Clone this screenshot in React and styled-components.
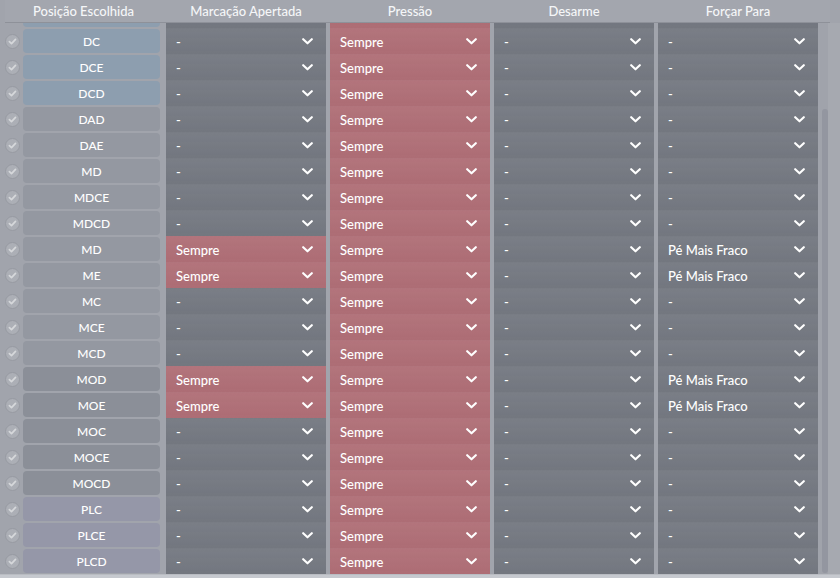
import React, { useLayoutEffect, useRef } from 'react';
import styled, { createGlobalStyle } from 'styled-components';

const Global = createGlobalStyle`
  html, body { margin: 0; padding: 0; background: #a1a4ac; }
  body { font-family: Lato, "Open Sans", "Liberation Sans", sans-serif; }
  * { box-sizing: border-box; }
`;

const Frame = styled.div`
  width: 840px;
  height: 578px;
  display: flex;
  flex-direction: column;
  background: #a1a4ac;
  overflow: hidden;
`;

const Header = styled.div`
  height: 23px;
  width: 825px;
  margin-left: 5px;
  flex: none;
  display: grid;
  grid-template-columns: 157px 160px 160px 160px 160px;
  column-gap: 4px;
  align-items: center;
  border-bottom: 1px solid #8e9199;
  background: #a3a6ae;
`;

const HeadCell = styled.div`
  text-align: center;
  color: #f5f6f8;
  font-size: 13px;
  font-weight: 500;
  line-height: 22px;
  white-space: nowrap;
`;

const Main = styled.div`
  flex: 1;
  display: flex;
  min-height: 0;
`;

const List = styled.div`
  width: 818px;
  flex: none;
  overflow: hidden;
`;

const ScrollRail = styled.div`
  flex: 1;
  padding-left: 4px;
  background: linear-gradient(to right, #a0a3ab 10px, #a6a9b0 10px);
`;

const ScrollThumb = styled.div`
  width: 6px;
  border-radius: 3px;
  background: #9396a0;
`;

const Footer = styled.div`
  height: 4px;
  flex: none;
  background: #c6c9cf;
  border-top: 1px solid #b9bcc2;
`;

const Row = styled.div`
  height: 26px;
  width: 818px;
  display: grid;
  grid-template-columns: 19px 139px 160px 160px 160px 160px;
  column-gap: 4px;
  align-items: stretch;
`;

const CheckWrap = styled.div`
  display: flex;
  align-items: center;
  padding-left: 5px;
`;

const PosButton = styled.div`
  align-self: center;
  width: 137px;
  height: 24px;
  border-radius: 4px;
  background: ${p => p.$bg};
  color: #ffffff;
  font-size: 12px;
  font-weight: 500;
  display: flex;
  align-items: center;
  justify-content: center;
`;

const Cell = styled.div`
  display: flex;
  align-items: center;
  justify-content: space-between;
  padding: 0 13px 0 10px;
  color: #ffffff;
  font-size: 13px;
  font-weight: 500;
  background-color: ${p => (p.$on ? '#b06f77' : '#757982')};
  background-image: linear-gradient(to bottom, rgba(255,255,255,0.035), rgba(0,0,0,0.02));
  border-top: 1px solid ${p => (p.$on ? 'rgba(255,255,255,0.05)' : 'rgba(255,255,255,0.04)')};
`;

const CellText = styled.span`
  white-space: nowrap;
`;

const Chevron = () => (
  <svg width="11" height="7" viewBox="0 0 11 7" aria-hidden="true">
    <path d="M1.2 1.2 L5.5 5.3 L9.8 1.2" fill="none" stroke="#ffffff" strokeWidth="2.1" strokeLinecap="round" strokeLinejoin="round" />
  </svg>
);

const Check = () => (
  <svg width="15" height="15" viewBox="0 0 15 15" aria-hidden="true" style={{ flex: 'none' }}>
    <circle cx="7.5" cy="7.5" r="7" fill="#acafb6" stroke="#979aa2" strokeWidth="1" />
    <path d="M4.4 7.7 L6.5 9.7 L10.5 5.4" fill="none" stroke="#d6d8db" strokeWidth="1.7" strokeLinecap="round" strokeLinejoin="round" />
  </svg>
);

const COLORS = {
  def: '#8d9eaf',
  mid: '#9498a1',
  att: '#8b8f98',
  fwd: '#9597a8',
};

const rows = [
  ['DD', 'def'],
  ['DC', 'def'], ['DCE', 'def'], ['DCD', 'def'],
  ['DAD', 'mid'], ['DAE', 'mid'], ['MD', 'mid'], ['MDCE', 'mid'], ['MDCD', 'mid'],
  ['MD', 'mid', true], ['ME', 'mid', true], ['MC', 'mid'], ['MCE', 'mid'], ['MCD', 'mid'],
  ['MOD', 'att', true], ['MOE', 'att', true], ['MOC', 'att'], ['MOCE', 'att'], ['MOCD', 'att'],
  ['PLC', 'fwd'], ['PLCE', 'fwd'], ['PLCD', 'fwd'],
];

const Select = ({ on, value }) => (
  <Cell $on={on}>
    <CellText>{value}</CellText>
    <Chevron />
  </Cell>
);

export default function App() {
  const listRef = useRef(null);
  useLayoutEffect(() => {
    const el = listRef.current;
    if (el) el.scrollTop = el.scrollHeight;
  }, []);

  return (
    <>
      <Global />
      <Frame>
        <Header>
          <HeadCell>Posição Escolhida</HeadCell>
          <HeadCell>Marcação Apertada</HeadCell>
          <HeadCell>Pressão</HeadCell>
          <HeadCell>Desarme</HeadCell>
          <HeadCell>Forçar Para</HeadCell>
        </Header>
        <Main>
          <List ref={listRef}>
            {rows.map(([name, kind, hot], i) => (
              <Row key={i}>
                <CheckWrap><Check /></CheckWrap>
                <PosButton $bg={COLORS[kind]}>{name}</PosButton>
                <Select on={!!hot} value={hot ? 'Sempre' : '-'} />
                <Select on value="Sempre" />
                <Select value="-" />
                <Select value={hot ? 'Pé Mais Fraco' : '-'} />
              </Row>
            ))}
          </List>
          <ScrollRail>
            <ScrollThumb style={{ marginTop: 86, height: 464 }} />
          </ScrollRail>
        </Main>
        <Footer />
      </Frame>
    </>
  );
}
